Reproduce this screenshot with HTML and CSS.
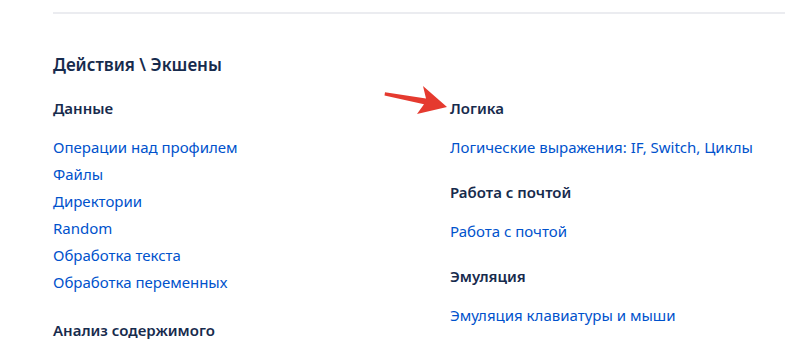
FILE: index.html
```html
<!DOCTYPE html>
<html lang="ru">

<head>
  <meta charset="UTF-8">
  <meta name="viewport" content="width=device-width, initial-scale=1.0">
  <title>Действия</title>
  <link rel="stylesheet" href="styles.css">
</head>

<body>
  <div class="page">
    <hr class="divider">
    <h2 class="title">Действия \ Экшены</h2>
    <div class="columns">
      <div class="column">
        <div class="section">
          <h3 class="section-title">Данные</h3>
          <ul class="links">
            <li><a href="#">Операции над профилем</a></li>
            <li><a href="#">Файлы</a></li>
            <li><a href="#">Директории</a></li>
            <li><a href="#">Random</a></li>
            <li><a href="#">Обработка текста</a></li>
            <li><a href="#">Обработка переменных</a></li>
          </ul>
        </div>
        <div class="section">
          <h3 class="section-title">Анализ содержимого</h3>
        </div>
      </div>
      <div class="column">
        <div class="section">
          <h3 class="section-title">Логика</h3>
          <ul class="links">
            <li><a href="#">Логические выражения: IF, Switch, Циклы</a></li>
          </ul>
        </div>
        <div class="section">
          <h3 class="section-title">Работа с почтой</h3>
          <ul class="links">
            <li><a href="#">Работа с почтой</a></li>
          </ul>
        </div>
        <div class="section">
          <h3 class="section-title">Эмуляция</h3>
          <ul class="links">
            <li><a href="#">Эмуляция клавиатуры и мыши</a></li>
          </ul>
        </div>
      </div>
    </div>
    <!-- стрелка-пометка поверх скриншота -->
    <svg class="arrow" width="70" height="34" viewBox="382 84 70 34">
      <path d="M385 92.2 L426 98.5 L423 86 L447 107 L417 114 L424 104.3 L384.5 95.5 Z" fill="#e53a2f" />
    </svg>
  </div>
</body>

</html>
```

FILE: styles.css
```css
body {
  margin: 0;
  background: #fff;
  font-family: "Noto Sans", "Open Sans", sans-serif;
  color: #172b4d;
  overflow: hidden;
}

.page {
  position: relative;
  padding-left: 53px;
  padding-top: 12px;
}

.divider {
  margin: 0;
  border: 0;
  height: 2px;
  background: #ebecf0;
}

.title {
  margin: 39px 0 0;
  font-size: 17px;
  line-height: 24px;
  font-weight: 600;
}

.columns {
  display: grid;
  grid-template-columns: 397px 1fr;
  margin-top: 21px;
}

.section + .section {
  margin-top: 25.5px;
}

.column:first-child .section + .section {
  margin-top: 27.5px;
}

.section-title {
  margin: 0;
  font-size: 15px;
  line-height: 20px;
  font-weight: 600;
}

.links {
  list-style: none;
  margin: 18.5px 0 0;
  padding: 0;
}

.links li {
  line-height: 20px;
  font-size: 15px;
}

.links li + li {
  margin-top: 7.2px;
}

.links a {
  color: #0052cc;
  text-decoration: none;
}

.arrow {
  position: absolute;
  left: 382px;
  top: 84px;
}
```
